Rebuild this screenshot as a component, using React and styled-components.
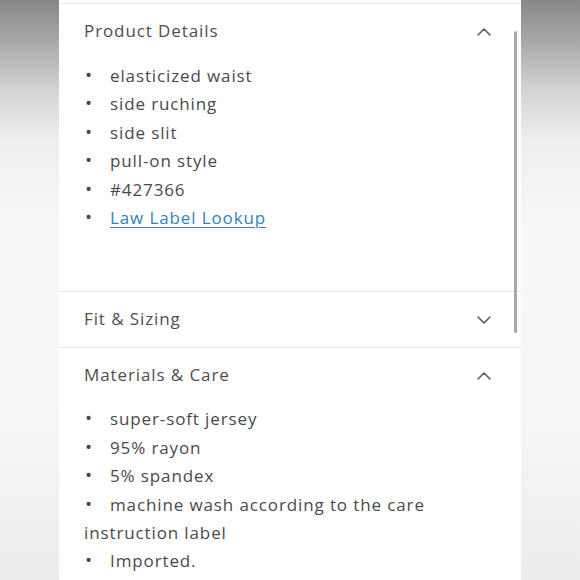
import styled, { createGlobalStyle } from "styled-components";

const GlobalStyle = createGlobalStyle`
  html, body {
    margin: 0;
    padding: 0;
    background: #ffffff;
  }
  * {
    box-sizing: border-box;
  }
`;

const Page = styled.div`
  display: flex;
  width: 580px;
  height: 580px;
  overflow: hidden;
  font-family: "Open Sans", "Liberation Sans", sans-serif;
  color: #4a4a4a;
`;

const SideBand = styled.div`
  width: 59px;
  flex-shrink: 0;
  background: linear-gradient(
    to bottom,
    #878787 0%,
    #adadad 8%,
    #d6d6d6 16%,
    #eeeeee 24%,
    #f8f8f8 40%,
    #f7f7f8 70%,
    #ececee 100%
  );
`;

const Panel = styled.div`
  position: relative;
  flex: 1;
  padding-top: 3px;
  background: #ffffff;
`;

const Scrollbar = styled.div`
  position: absolute;
  top: 31px;
  right: 4px;
  width: 3px;
  height: 302px;
  border-radius: 2px;
  background: #a9a9a9;
`;

const Section = styled.section`
  border-top: ${(p) => (p.$first ? "1px solid #e8e8e8" : "none")};
  border-bottom: 1px solid #e6e6e6;

  &:last-child {
    border-bottom: none;
  }
`;

const Header = styled.div`
  display: flex;
  align-items: center;
  justify-content: space-between;
  height: 55px;
  padding: 0 30px 3px 25px;
  font-size: 17px;
  letter-spacing: 0.9px;
  color: #4f4f4f;

  svg {
    margin-top: 3px;
  }
`;

const Content = styled.div`
  padding: ${(p) => p.$pad};
`;

const List = styled.ul`
  list-style: none;
  margin: 0;
  padding: 0 30px 0 25px;
`;

const Item = styled.li`
  font-size: 17px;
  line-height: 28.4px;
  letter-spacing: 0.88px;
  color: #4a4a4a;
`;

const Bullet = styled.span`
  display: inline-block;
  width: 26px;
  padding-left: 1px;
  font-size: 19px;
  line-height: 1;
`;

const Link = styled.a`
  color: #3481bd;
  text-decoration: underline;
  text-underline-offset: 3px;
  text-decoration-thickness: 1px;
`;

const Chevron = ({ up }) => (
  <svg width="14" height="8" viewBox="0 0 14 8" fill="none">
    <polyline
      points={up ? "1,7 7,1 13,7" : "1,1 7,7 13,1"}
      stroke="#555"
      strokeWidth="1.5"
      strokeLinecap="round"
      strokeLinejoin="round"
    />
  </svg>
);

const productDetails = [
  "elasticized waist",
  "side ruching",
  "side slit",
  "pull-on style",
  "#427366",
];

const materials = [
  "super-soft jersey",
  "95% rayon",
  "5% spandex",
  "machine wash according to the care instruction label",
  "Imported.",
];

const App = () => {
  return (
    <>
      <GlobalStyle />
      <Page>
        <SideBand />
        <Panel>
          <Section $first>
            <Header>
              Product Details
              <Chevron up />
            </Header>
            <Content $pad="3px 0 59px">
              <List>
                {productDetails.map((item) => (
                  <Item key={item}>
                    <Bullet>•</Bullet>
                    {item}
                  </Item>
                ))}
                <Item>
                  <Bullet>•</Bullet>
                  <Link href="#">Law Label Lookup</Link>
                </Item>
              </List>
            </Content>
          </Section>

          <Section>
            <Header>
              Fit &amp; Sizing
              <Chevron />
            </Header>
          </Section>

          <Section>
            <Header>
              Materials &amp; Care
              <Chevron up />
            </Header>
            <Content $pad="2px 0 20px">
              <List>
                {materials.map((item) => (
                  <Item key={item}>
                    <Bullet>•</Bullet>
                    {item}
                  </Item>
                ))}
              </List>
            </Content>
          </Section>
          <Scrollbar />
        </Panel>
        <SideBand />
      </Page>
    </>
  );
};

export default App;
